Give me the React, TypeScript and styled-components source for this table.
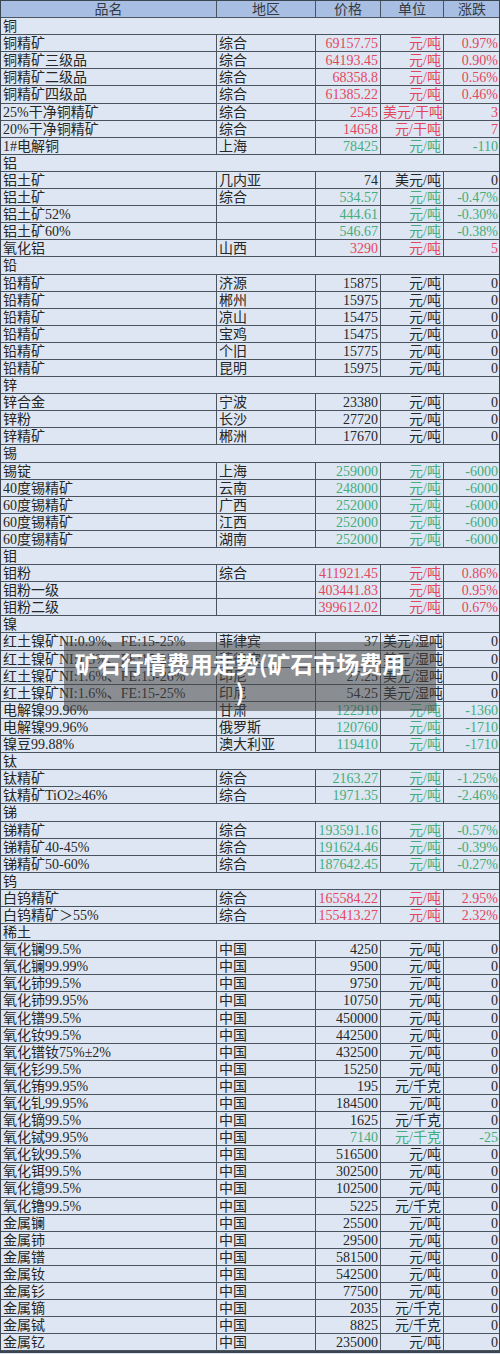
import React from "react";
import styled, { createGlobalStyle } from "styled-components";

const GlobalStyle = createGlobalStyle`
  html, body { margin: 0; padding: 0; background: #dde6f2; }
  body { font-family: "Liberation Serif", "Noto Sans CJK SC", serif; }
`;

type Tone = "red" | "green" | "black";
type Item = [string, string, string, string, string, Tone];
type Group = { name: string; items: Item[] };

const groups: Group[] = [
  {
    name: "铜",
    items: [
      ["铜精矿", "综合", "69157.75", "元/吨", "0.97%", "red"],
      ["铜精矿三级品", "综合", "64193.45", "元/吨", "0.90%", "red"],
      ["铜精矿二级品", "综合", "68358.8", "元/吨", "0.56%", "red"],
      ["铜精矿四级品", "综合", "61385.22", "元/吨", "0.46%", "red"],
      ["25%干净铜精矿", "综合", "2545", "美元/干吨", "3", "red"],
      ["20%干净铜精矿", "综合", "14658", "元/干吨", "7", "red"],
      ["1#电解铜", "上海", "78425", "元/吨", "-110", "green"],
    ],
  },
  {
    name: "铝",
    items: [
      ["铝土矿", "几内亚", "74", "美元/吨", "0", "black"],
      ["铝土矿", "综合", "534.57", "元/吨", "-0.47%", "green"],
      ["铝土矿52%", "", "444.61", "元/吨", "-0.30%", "green"],
      ["铝土矿60%", "", "546.67", "元/吨", "-0.38%", "green"],
      ["氧化铝", "山西", "3290", "元/吨", "5", "red"],
    ],
  },
  {
    name: "铅",
    items: [
      ["铅精矿", "济源", "15875", "元/吨", "0", "black"],
      ["铅精矿", "郴州", "15975", "元/吨", "0", "black"],
      ["铅精矿", "凉山", "15475", "元/吨", "0", "black"],
      ["铅精矿", "宝鸡", "15475", "元/吨", "0", "black"],
      ["铅精矿", "个旧", "15775", "元/吨", "0", "black"],
      ["铅精矿", "昆明", "15975", "元/吨", "0", "black"],
    ],
  },
  {
    name: "锌",
    items: [
      ["锌合金", "宁波", "23380", "元/吨", "0", "black"],
      ["锌粉", "长沙", "27720", "元/吨", "0", "black"],
      ["锌精矿", "郴洲", "17670", "元/吨", "0", "black"],
    ],
  },
  {
    name: "锡",
    items: [
      ["锡锭", "上海", "259000", "元/吨", "-6000", "green"],
      ["40度锡精矿", "云南", "248000", "元/吨", "-6000", "green"],
      ["60度锡精矿", "广西", "252000", "元/吨", "-6000", "green"],
      ["60度锡精矿", "江西", "252000", "元/吨", "-6000", "green"],
      ["60度锡精矿", "湖南", "252000", "元/吨", "-6000", "green"],
    ],
  },
  {
    name: "钼",
    items: [
      ["钼粉", "综合", "411921.45", "元/吨", "0.86%", "red"],
      ["钼粉一级", "", "403441.83", "元/吨", "0.95%", "red"],
      ["钼粉二级", "", "399612.02", "元/吨", "0.67%", "red"],
    ],
  },
  {
    name: "镍",
    items: [
      ["红土镍矿NI:0.9%、FE:15-25%", "菲律宾", "37", "美元/湿吨", "0", "black"],
      ["红土镍矿NI:1.5%、FE:15-25%", "菲律宾", "46", "美元/湿吨", "0", "black"],
      ["红土镍矿NI:1.6%、FE:15-26%", "印尼", "27.25", "美元/湿吨", "0", "black"],
      ["红土镍矿NI:1.6%、FE:15-25%", "印尼", "54.25", "美元/湿吨", "0", "black"],
      ["电解镍99.96%", "甘肃", "122910", "元/吨", "-1360", "green"],
      ["电解镍99.96%", "俄罗斯", "120760", "元/吨", "-1710", "green"],
      ["镍豆99.88%", "澳大利亚", "119410", "元/吨", "-1710", "green"],
    ],
  },
  {
    name: "钛",
    items: [
      ["钛精矿", "综合", "2163.27", "元/吨", "-1.25%", "green"],
      ["钛精矿TiO2≥46%", "综合", "1971.35", "元/吨", "-2.46%", "green"],
    ],
  },
  {
    name: "锑",
    items: [
      ["锑精矿", "综合", "193591.16", "元/吨", "-0.57%", "green"],
      ["锑精矿40-45%", "综合", "191624.46", "元/吨", "-0.39%", "green"],
      ["锑精矿50-60%", "综合", "187642.45", "元/吨", "-0.27%", "green"],
    ],
  },
  {
    name: "钨",
    items: [
      ["白钨精矿", "综合", "165584.22", "元/吨", "2.95%", "red"],
      ["白钨精矿＞55%", "综合", "155413.27", "元/吨", "2.32%", "red"],
    ],
  },
  {
    name: "稀土",
    items: [
      ["氧化镧99.5%", "中国", "4250", "元/吨", "0", "black"],
      ["氧化镧99.99%", "中国", "9500", "元/吨", "0", "black"],
      ["氧化铈99.5%", "中国", "9750", "元/吨", "0", "black"],
      ["氧化铈99.95%", "中国", "10750", "元/吨", "0", "black"],
      ["氧化镨99.5%", "中国", "450000", "元/吨", "0", "black"],
      ["氧化钕99.5%", "中国", "442500", "元/吨", "0", "black"],
      ["氧化镨钕75%±2%", "中国", "432500", "元/吨", "0", "black"],
      ["氧化钐99.5%", "中国", "15250", "元/吨", "0", "black"],
      ["氧化铕99.95%", "中国", "195", "元/千克", "0", "black"],
      ["氧化钆99.95%", "中国", "184500", "元/吨", "0", "black"],
      ["氧化镝99.5%", "中国", "1625", "元/千克", "0", "black"],
      ["氧化铽99.95%", "中国", "7140", "元/千克", "-25", "green"],
      ["氧化钬99.5%", "中国", "516500", "元/吨", "0", "black"],
      ["氧化铒99.5%", "中国", "302500", "元/吨", "0", "black"],
      ["氧化镱99.5%", "中国", "102500", "元/吨", "0", "black"],
      ["氧化镥99.5%", "中国", "5225", "元/千克", "0", "black"],
      ["金属镧", "中国", "25500", "元/吨", "0", "black"],
      ["金属铈", "中国", "29500", "元/吨", "0", "black"],
      ["金属镨", "中国", "581500", "元/吨", "0", "black"],
      ["金属钕", "中国", "542500", "元/吨", "0", "black"],
      ["金属钐", "中国", "77500", "元/吨", "0", "black"],
      ["金属镝", "中国", "2035", "元/千克", "0", "black"],
      ["金属铽", "中国", "8825", "元/千克", "0", "black"],
      ["金属钇", "中国", "235000", "元/吨", "0", "black"],
    ],
  },
];

const toneColor: Record<Tone, string> = {
  red: "#e4465d",
  green: "#45ad7a",
  black: "#262626",
};

const Sheet = styled.div`
  position: relative;
  width: 500px;
  box-sizing: border-box;
  border: 1px solid #3c4650;
  border-bottom-width: 2px;
  background: #dde6f2;
  font-family: "Liberation Serif", "Noto Sans CJK SC", serif;
  font-size: 14px;
  color: #262626;
`;

const Row = styled.div<{ $head?: boolean }>`
  display: grid;
  grid-template-columns: 216px 99px 65px 63px 1fr;
  height: 17.1px;
  box-sizing: border-box;
  border-bottom: 1px solid #4a545e;
  background: ${(p) => (p.$head ? "#a8bfe3" : "#dde6f2")};
`;

const Cell = styled.div<{ $align?: "left" | "right" | "center"; $tone?: Tone }>`
  box-sizing: border-box;
  padding: 1px 2px 0;
  border-right: 1px solid #4a545e;
  line-height: 16px;
  white-space: nowrap;
  overflow: hidden;
  text-align: ${(p) => p.$align ?? "left"};
  color: ${(p) => toneColor[p.$tone ?? "black"]};
  &:last-child {
    border-right: none;
    padding-right: 1px;
  }
`;

const HeadCell = styled(Cell)`
  text-align: center;
  color: #343a44;
`;

const CategoryRow = styled(Row)`
  grid-template-columns: 1fr;
`;

const Caption = styled.div`
  position: absolute;
  left: 63px;
  top: 641px;
  width: 372px;
  height: 69px;
  box-sizing: border-box;
  padding: 7px 20px 0 0;
  background: rgba(70, 70, 70, 0.55);
  color: #ffffff;
  font-family: "Noto Sans CJK SC", "Noto Sans", sans-serif;
  font-weight: 700;
  font-size: 23px;
  line-height: 28px;
  text-align: center;
`;

export default function App() {
  return (
    <>
      <GlobalStyle />
      <Sheet>
        <Row $head>
          <HeadCell>品名</HeadCell>
          <HeadCell>地区</HeadCell>
          <HeadCell>价格</HeadCell>
          <HeadCell>单位</HeadCell>
          <HeadCell>涨跌</HeadCell>
        </Row>
        {groups.map((g) => (
          <React.Fragment key={g.name}>
            <CategoryRow>
              <Cell>{g.name}</Cell>
            </CategoryRow>
            {g.items.map((it, i) => (
              <Row key={i}>
                <Cell>{it[0]}</Cell>
                <Cell>{it[1]}</Cell>
                <Cell $align="right" $tone={it[5]}>{it[2]}</Cell>
                <Cell $align="right" $tone={it[5]}>{it[3]}</Cell>
                <Cell $align="right" $tone={it[5]}>{it[4]}</Cell>
              </Row>
            ))}
          </React.Fragment>
        ))}
        <Caption>
          矿石行情费用走势(矿石市场费用
          <br />)
        </Caption>
      </Sheet>
    </>
  );
}
